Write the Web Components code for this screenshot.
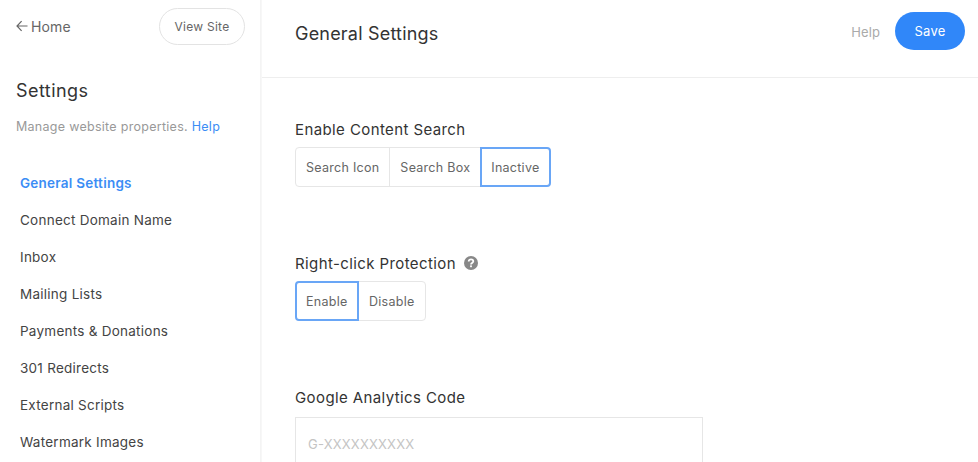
<!DOCTYPE html>
<html>
<head>
<meta charset="utf-8">
<title>General Settings</title>
<style>
  html, body { margin: 0; height: 100%; overflow: hidden; background: #fff; }
  body { font-family: Inter, "Liberation Sans", sans-serif; }
</style>
</head>
<body>
<settings-app>
  <settings-sidebar slot="sidebar">
    <nav-item active>General Settings</nav-item>
    <nav-item>Connect Domain Name</nav-item>
    <nav-item>Inbox</nav-item>
    <nav-item>Mailing Lists</nav-item>
    <nav-item>Payments &amp; Donations</nav-item>
    <nav-item>301 Redirects</nav-item>
    <nav-item>External Scripts</nav-item>
    <nav-item>Watermark Images</nav-item>
  </settings-sidebar>

  <settings-header slot="header" title="General Settings"></settings-header>

  <form-field label="Enable Content Search">
    <segment-group>
      <segment-option>Search Icon</segment-option>
      <segment-option>Search Box</segment-option>
      <segment-option selected>Inactive</segment-option>
    </segment-group>
  </form-field>

  <form-field label="Right-click Protection" hint>
    <segment-group>
      <segment-option selected>Enable</segment-option>
      <segment-option>Disable</segment-option>
    </segment-group>
  </form-field>

  <form-field label="Google Analytics Code">
    <text-box placeholder="G-XXXXXXXXXX"></text-box>
  </form-field>
</settings-app>

<script>
class SettingsApp extends HTMLElement {
  constructor() {
    super();
    this.attachShadow({ mode: "open" });
    this.shadowRoot.innerHTML = `
      <style>
        :host { display: flex; height: 462px; overflow: hidden; color: #333; }
        .side { flex: 0 0 260px; }
        .main {
          flex: 1; min-width: 0; padding-left: 2px;
          background: linear-gradient(90deg, #f3f3f3, #f8f8f8) 0 0 / 2px 100% no-repeat;
        }
        .body { padding: 41px 0 0 33px; display: flex; flex-direction: column; gap: 66px; }
      </style>
      <div class="side"><slot name="sidebar"></slot></div>
      <div class="main">
        <slot name="header"></slot>
        <div class="body"><slot></slot></div>
      </div>
    `;
  }
}

class SettingsSidebar extends HTMLElement {
  constructor() {
    super();
    this.attachShadow({ mode: "open" });
    this.shadowRoot.innerHTML = `
      <style>
        :host { display: block; }
        .top {
          display: flex; justify-content: space-between; align-items: center;
          padding: 8px 15px 0 16px;
        }
        .home { display: flex; align-items: center; font-size: 14px; letter-spacing: .15px; color: #666; }
        .home svg { margin-right: 3px; position: relative; top: -1px; }
        .view {
          box-sizing: border-box; width: 86px; height: 37px;
          border: 1px solid #e3e3e3; border-radius: 19px;
          display: flex; align-items: center; justify-content: center;
          font-size: 12px; letter-spacing: .25px; color: #666;
        }
        h2 { margin: 34px 0 0 16px; font-size: 18px; line-height: 24px; font-weight: 400; letter-spacing: .45px; color: #333; }
        p { margin: 16px 0 0 16px; font-size: 12.5px; line-height: 16px; letter-spacing: .28px; color: #999; }
        p a { color: #3b8df5; }
        nav { margin-top: 30px; padding-left: 20px; display: flex; flex-direction: column; }
      </style>
      <div class="top">
        <span class="home">
          <svg width="12" height="12" viewBox="0 0 12 12" fill="none" stroke="#666" stroke-width="1.2">
            <path d="M11.5 6H1M5.6 1.2 1 6l4.6 4.8"/>
          </svg>Home
        </span>
        <span class="view">View Site</span>
      </div>
      <h2>Settings</h2>
      <p>Manage website properties. <a>Help</a></p>
      <nav><slot></slot></nav>
    `;
  }
}

class NavItem extends HTMLElement {
  constructor() {
    super();
    this.attachShadow({ mode: "open" });
    this.shadowRoot.innerHTML = `
      <style>
        :host {
          display: block; height: 37px; line-height: 37px;
          font-size: 13.5px; letter-spacing: .25px; color: #444; white-space: nowrap;
        }
        :host([active]) { color: #3b8df5; font-weight: 600; }
      </style>
      <slot></slot>
    `;
  }
}

class SettingsHeader extends HTMLElement {
  constructor() {
    super();
    this.attachShadow({ mode: "open" });
    this.shadowRoot.innerHTML = `
      <style>
        :host {
          display: flex; align-items: center; box-sizing: border-box;
          height: 78px; padding: 0 13px 16px 33px;
          border-bottom: 1px solid #eee;
        }
        h1 { margin: 0; flex: 1; font-size: 18px; font-weight: 400; letter-spacing: .2px; color: #333; padding-top: 5px; }
        .help { font-size: 13px; letter-spacing: .1px; color: #aaa; margin-right: 15px; padding-top: 3px; }
        .save {
          width: 70px; height: 38px; border-radius: 19px; background: #3087f9;
          display: flex; align-items: center; justify-content: center;
          color: #fff; font-size: 13px; letter-spacing: .2px; font-weight: 400;
        }
      </style>
      <h1></h1>
      <span class="help">Help</span>
      <span class="save">Save</span>
    `;
    this.shadowRoot.querySelector("h1").textContent = this.getAttribute("title");
  }
}

class FormField extends HTMLElement {
  constructor() {
    super();
    this.attachShadow({ mode: "open" });
    this.shadowRoot.innerHTML = `
      <style>
        :host { display: block; }
        .label {
          display: flex; align-items: center; gap: 8px; height: 20px; margin-bottom: 8px;
          font-size: 15px; letter-spacing: .4px; color: #333;
        }
        svg { display: none; }
        :host([hint]) svg { display: block; }
      </style>
      <div class="label">
        <span></span>
        <svg width="14" height="14" viewBox="0 0 14 14">
          <circle cx="7" cy="7" r="7" fill="#888"/>
          <path d="M4.7 5.5C4.7 4.2 5.7 3.3 7 3.3s2.3.8 2.3 2c0 1.8-2.3 1.7-2.3 3.2" fill="none" stroke="#fff" stroke-width="1.8"/>
          <rect x="6.1" y="9.4" width="1.8" height="1.8" fill="#fff"/>
        </svg>
      </div>
      <slot></slot>
    `;
    this.shadowRoot.querySelector("span").textContent = this.getAttribute("label");
  }
}

class SegmentGroup extends HTMLElement {
  constructor() {
    super();
    this.attachShadow({ mode: "open" });
    this.shadowRoot.innerHTML = `
      <style>
        :host { display: inline-flex; height: 40px; }
      </style>
      <slot></slot>
    `;
  }
}

class SegmentOption extends HTMLElement {
  constructor() {
    super();
    this.attachShadow({ mode: "open" });
    this.shadowRoot.innerHTML = `
      <style>
        :host {
          display: flex; align-items: center; box-sizing: border-box; height: 40px;
          padding: 0 10px 0 10.5px; margin-left: -1px;
          border: 1px solid #e6e6e6;
          font-size: 12.5px; letter-spacing: .27px; color: #666; white-space: nowrap;
        }
        :host(:first-child) { margin-left: 0; padding: 0 9.5px 0 10px; border-radius: 4px 0 0 4px; }
        :host(:last-child) { border-radius: 0 4px 4px 0; padding-right: 10.5px; }
        :host([selected]) { border: 2px solid #69a6f6; padding: 0 9px; position: relative; }
      </style>
      <slot></slot>
    `;
  }
}

class TextBox extends HTMLElement {
  constructor() {
    super();
    this.attachShadow({ mode: "open" });
    this.shadowRoot.innerHTML = `
      <style>
        :host {
          display: flex; align-items: center; box-sizing: border-box;
          width: 408px; height: 54px; padding: 0 12px; margin-top: 10px;
          border: 1px solid #e6e6e6;
          font-size: 13px; letter-spacing: .2px; color: #c4c4c4;
        }
      </style>
      <span></span>
    `;
    this.shadowRoot.querySelector("span").textContent = this.getAttribute("placeholder");
  }
}

customElements.define("settings-app", SettingsApp);
customElements.define("settings-sidebar", SettingsSidebar);
customElements.define("nav-item", NavItem);
customElements.define("settings-header", SettingsHeader);
customElements.define("form-field", FormField);
customElements.define("segment-group", SegmentGroup);
customElements.define("segment-option", SegmentOption);
customElements.define("text-box", TextBox);
</script>
</body>
</html>
